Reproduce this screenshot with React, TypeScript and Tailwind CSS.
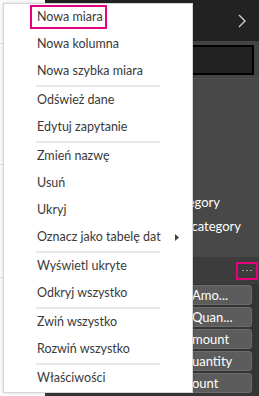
import React from "react";

type Item = { label: string; sep?: boolean; sub?: boolean; focus?: boolean };

const items: Item[] = [
  { label: "Nowa miara", focus: true },
  { label: "Nowa kolumna" },
  { label: "Nowa szybka miara", sep: true },
  { label: "Odśwież dane" },
  { label: "Edytuj zapytanie", sep: true },
  { label: "Zmień nazwę" },
  { label: "Usuń" },
  { label: "Ukryj" },
  { label: "Oznacz jako tabelę dat", sub: true, sep: true },
  { label: "Wyświetl ukryte" },
  { label: "Odkryj wszystko", sep: true },
  { label: "Zwiń wszystko" },
  { label: "Rozwiń wszystko", sep: true },
  { label: "Właściwości" },
];

const buttons = ["Amo...", "Quan...", "mount", "uantity", "ount"];

export default function App() {
  return (
    <div
      className="relative flex w-[259px] h-[396px] overflow-hidden bg-[#333333]"
      style={{ fontFamily: 'Lato, "Open Sans", sans-serif' }}
    >
      {/* left light column */}
      <div className="flex flex-col w-[45px] h-full bg-[#fbfbfb]">
        <div className="h-[44px] border-b border-[#e2e2e2]" />
        <div className="h-[121px] border-b border-[#e2e2e2]" />
        <div className="h-[113px] border-b border-[#e2e2e2]" />
        <div className="flex-1" />
      </div>

      {/* right dark panel */}
      <div className="flex flex-col flex-1 h-full">
        <div className="h-[41px] bg-[#222222] flex items-center justify-end pr-[13px]">
          <svg width="8" height="14" viewBox="0 0 8 14" fill="none">
            <path d="M1 1 L7 7 L1 13" stroke="#d0d0d0" strokeWidth="1.4" />
          </svg>
        </div>
        <div className="h-[37px] bg-[#444444] pt-[4px] pr-[5px] pl-[20px]">
          <div className="h-[30px] border-2 border-black bg-[#222222]" />
        </div>
        <div className="h-[179px] bg-[#484848] border-t border-[#505050] pt-[111px] pl-[123px] text-white text-[13px] leading-[24px]">
          <div>Category</div>
          <div className="ml-[2px]">Subcategory</div>
        </div>
        <div className="h-[27px] bg-[#3c3c3c] flex items-center justify-end pr-[1px]">
          <div className="w-[22px] h-[18px] border-2 border-[#e6007e] flex items-center justify-center gap-[2px]">
            <span className="w-[2px] h-[1px] bg-[#9a9a9a]" />
            <span className="w-[2px] h-[1px] bg-[#9a9a9a]" />
            <span className="w-[2px] h-[1px] bg-[#9a9a9a]" />
          </div>
        </div>
        <div className="flex-1 bg-[#353535] flex flex-col gap-[2px] pt-[1px] pl-[33px] pr-[7px]">
          {buttons.map((b) => (
            <div
              key={b}
              className="h-[20px] rounded-[3px] bg-[#5c5c5c] border border-[#6c6c6c] text-white text-[13px] leading-[18px] pl-[113px] whitespace-nowrap overflow-hidden"
            >
              {b}
            </div>
          ))}
        </div>
      </div>

      {/* context menu */}
      <div className="absolute left-[3px] top-[3px] w-[190px] bg-white border border-[#d6d6d6] shadow-[0_0_3px_rgba(0,0,0,0.15)]">
        {items.map((it) => (
          <React.Fragment key={it.label}>
            <div className="relative h-[27px] flex items-center pl-[33px] text-[12.5px] text-[#3a3a3a] whitespace-nowrap">
              {it.focus && (
                <div className="absolute left-[26px] top-[1px] w-[77px] h-[24px] border-2 border-[#e6007e]" />
              )}
              <span>{it.label}</span>
              {it.sub && (
                <svg className="absolute left-[171px] top-[10px]" width="4" height="7" viewBox="0 0 4 7">
                  <path d="M0 0 L4 3.5 L0 7 Z" fill="#444" />
                </svg>
              )}
            </div>
            {it.sep && <div className="h-[2px] ml-[32px] w-[124px] bg-[#e8e8e8]" />}
          </React.Fragment>
        ))}
      </div>
    </div>
  );
}
